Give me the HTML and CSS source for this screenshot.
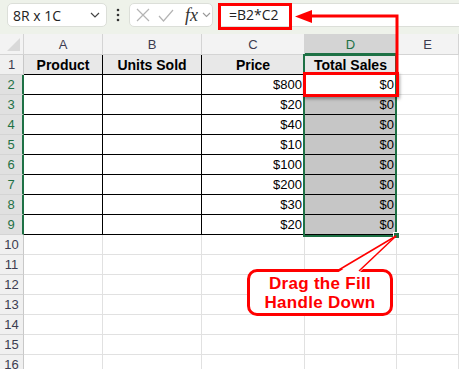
FILE: index.html
```html
<!DOCTYPE html>
<html>
<head>
<meta charset="utf-8">
<title>Fill Handle</title>
<link rel="stylesheet" href="styles.css">
</head>
<body>
<div class="app">

  <!-- name box, function buttons, formula bar -->
  <div class="toolbar">
    <div class="namebox">
      <span>8R x 1C</span>
      <svg class="chev" width="10" height="6" viewBox="0 0 10 6"><path d="M1 1 L5 5 L9 1" fill="none" stroke="#444" stroke-width="1.2"/></svg>
    </div>
    <div class="kebab">
      <svg width="4" height="14" viewBox="0 0 4 14"><circle cx="2" cy="2" r="1.3" fill="#333"/><circle cx="2" cy="7" r="1.3" fill="#333"/><circle cx="2" cy="12" r="1.3" fill="#333"/></svg>
    </div>
    <div class="fxbox">
      <svg width="14" height="14" viewBox="0 0 14 14"><path d="M1 1 L13 13 M13 1 L1 13" stroke="#b4b4b4" stroke-width="1.2"/></svg>
      <svg width="16" height="13" viewBox="0 0 16 13"><path d="M1 7 L5.5 12 L15 1" fill="none" stroke="#b4b4b4" stroke-width="1.2"/></svg>
      <span class="fx">fx</span>
      <svg width="9" height="6" viewBox="0 0 9 6"><path d="M1 1 L4.5 4.5 L8 1" fill="none" stroke="#999" stroke-width="1.1"/></svg>
    </div>
    <div class="formula">=B2*C2</div>
  </div>

  <!-- worksheet -->
  <div class="sheet">
    <div class="corner"></div>
    <div class="ch">A</div>
    <div class="ch">B</div>
    <div class="ch">C</div>
    <div class="ch sel">D</div>
    <div class="ch">E</div>

    <div class="rh">1</div>
    <div class="c t hd">Product</div>
    <div class="c t hd">Units Sold</div>
    <div class="c t hd">Price</div>
    <div class="c t hd">Total Sales</div>
    <div class="c"></div>

    <div class="rh sel">2</div>
    <div class="c t"></div>
    <div class="c t"></div>
    <div class="c t num">$800</div>
    <div class="c t num">$0</div>
    <div class="c"></div>

    <div class="rh sel">3</div>
    <div class="c t"></div>
    <div class="c t"></div>
    <div class="c t num">$20</div>
    <div class="c t num fill">$0</div>
    <div class="c"></div>

    <div class="rh sel">4</div>
    <div class="c t"></div>
    <div class="c t"></div>
    <div class="c t num">$40</div>
    <div class="c t num fill">$0</div>
    <div class="c"></div>

    <div class="rh sel">5</div>
    <div class="c t"></div>
    <div class="c t"></div>
    <div class="c t num">$10</div>
    <div class="c t num fill">$0</div>
    <div class="c"></div>

    <div class="rh sel">6</div>
    <div class="c t"></div>
    <div class="c t"></div>
    <div class="c t num">$100</div>
    <div class="c t num fill">$0</div>
    <div class="c"></div>

    <div class="rh sel">7</div>
    <div class="c t"></div>
    <div class="c t"></div>
    <div class="c t num">$200</div>
    <div class="c t num fill">$0</div>
    <div class="c"></div>

    <div class="rh sel">8</div>
    <div class="c t"></div>
    <div class="c t"></div>
    <div class="c t num">$30</div>
    <div class="c t num fill">$0</div>
    <div class="c"></div>

    <div class="rh sel">9</div>
    <div class="c t"></div>
    <div class="c t"></div>
    <div class="c t num">$20</div>
    <div class="c t num fill">$0</div>
    <div class="c"></div>

    <div class="rh">10</div>
    <div class="c"></div><div class="c"></div><div class="c"></div><div class="c"></div><div class="c"></div>
    <div class="rh">11</div>
    <div class="c"></div><div class="c"></div><div class="c"></div><div class="c"></div><div class="c"></div>
    <div class="rh">12</div>
    <div class="c"></div><div class="c"></div><div class="c"></div><div class="c"></div><div class="c"></div>
    <div class="rh">13</div>
    <div class="c"></div><div class="c"></div><div class="c"></div><div class="c"></div><div class="c"></div>
    <div class="rh">14</div>
    <div class="c"></div><div class="c"></div><div class="c"></div><div class="c"></div><div class="c"></div>
    <div class="rh">15</div>
    <div class="c"></div><div class="c"></div><div class="c"></div><div class="c"></div><div class="c"></div>
    <div class="rh">16</div>
    <div class="c"></div><div class="c"></div><div class="c"></div><div class="c"></div><div class="c"></div>
  </div>

  <!-- selection and annotations, drawn over the sheet -->
  <div class="selection"></div>
  <div class="handle"></div>
  <div class="redbox rb-formula"></div>
  <div class="redbox rb-cell"></div>

  <div class="callout">
    <span>Drag the Fill</span>
    <span>Handle Down</span>
  </div>

  <svg class="marks" width="459" height="369" viewBox="0 0 459 369">
    <polyline points="397,73 397,16 310,16" fill="none" stroke="#ff0000" stroke-width="3"/>
    <polygon points="295,16.5 312,10 312,23" fill="#ff0000"/>
    <polygon points="337,273 396,236 359,273" fill="#fff"/>
    <line x1="337" y1="271" x2="396" y2="236" stroke="#ff0000" stroke-width="1.5"/>
    <line x1="359" y1="271" x2="396" y2="236" stroke="#ff0000" stroke-width="1.5"/>
  </svg>

</div>
</body>
</html>
```

FILE: styles.css
```css
body {
	margin: 0;
	background: #fff;
	font-family: "Liberation Sans", Arial, sans-serif;
}

.app {
	position: relative;
	width: 459px;
	height: 369px;
	overflow: hidden;
}

/* top bar */
.toolbar {
	display: flex;
	align-items: flex-start;
	height: 34px;
	box-sizing: border-box;
	padding: 3px 0 0 7px;
	background: #eef2ea;
	font-family: "Open Sans", sans-serif;
	font-size: 14px;
	color: #222;
}

.namebox {
	display: flex;
	align-items: center;
	justify-content: space-between;
	width: 100px;
	height: 24px;
	box-sizing: border-box;
	padding: 0 6px 0 5px;
	background: #fff;
	border: 1px solid #dcdfd9;
	border-radius: 5px;
}

.kebab {
	display: flex;
	align-items: center;
	justify-content: center;
	width: 22px;
	height: 24px;
}

.fxbox {
	display: flex;
	align-items: center;
	gap: 8px;
	width: 84px;
	height: 24px;
	box-sizing: border-box;
	padding: 0 0 0 6px;
	background: #fff;
	border: 1px solid #dcdfd9;
	border-radius: 5px;
}

.fx {
	font-family: "Liberation Serif", serif;
	font-style: italic;
	font-size: 18px;
	color: #333;
	margin-left: 3px;
	margin-right: -4px;
}

.formula {
	flex: 1;
	height: 24px;
	margin-left: 5px;
	box-sizing: border-box;
	padding-left: 10px;
	background: #fff;
	border: 1px solid #dcdfd9;
	border-right: none;
	border-radius: 5px 0 0 5px;
	line-height: 22px;
}

/* grid */
.sheet {
	display: grid;
	grid-template-columns: 24px 79px 99px 103px 92px 62px;
	grid-template-rows: 21px repeat(16, 20px);
}

.corner {
	position: relative;
	background: #f3f3f3;
	border-right: 1px solid #d4d4d4;
	border-bottom: 1px solid #d4d4d4;
}

.corner:after {
	content: "";
	position: absolute;
	right: 3px;
	bottom: 3px;
	border-left: 13px solid transparent;
	border-bottom: 13px solid #d9d9d9;
}

.ch {
	box-sizing: border-box;
	background: #f3f3f3;
	border-right: 1px solid #d4d4d4;
	border-bottom: 1px solid #d4d4d4;
	text-align: center;
	font-size: 13px;
	line-height: 21px;
	color: #3c3c50;
}

.ch.sel {
	background: #d4d4d4;
	color: #1e7145;
	border-bottom: 2px solid #1e7145;
}

.rh {
	box-sizing: border-box;
	background: #f0f0f0;
	border-right: 1px solid #c8c8c8;
	border-bottom: 1px solid #d4d4d4;
	text-align: center;
	font-size: 13px;
	line-height: 20px;
	color: #3c3c50;
}

.rh.sel {
	background: #e0e0e0;
	color: #1e7145;
	border-right: 2px solid #1e7145;
}

.c {
	box-sizing: border-box;
	border-right: 1px solid #e1e1e1;
	border-bottom: 1px solid #e1e1e1;
	font-family: "Liberation Sans", sans-serif;
	font-size: 13px;
	line-height: 20px;
	color: #000;
}

.c.t {
	border-color: #000;
}

.hd {
	background: #e8e8e8;
	font-weight: bold;
	font-size: 14px;
	text-align: center;
}

.num {
	text-align: right;
	padding-right: 2px;
}

.fill {
	background: #c6c6c6;
}

/* overlays */
.selection {
	position: absolute;
	left: 303px;
	top: 54px;
	width: 94px;
	height: 183px;
	box-sizing: border-box;
	border: 2px solid #1e7145;
}

.handle {
	position: absolute;
	left: 393px;
	top: 232px;
	width: 5px;
	height: 5px;
	background: #1e7145;
	border: 1px solid #fff;
}

.redbox {
	position: absolute;
	box-sizing: border-box;
	border: 3px solid #ff0000;
}

.rb-formula {
	left: 218px;
	top: 3px;
	width: 74px;
	height: 27px;
}

.rb-cell {
	left: 303px;
	top: 72px;
	width: 96px;
	height: 25px;
	box-shadow: 1px 2px 3px rgba(0, 0, 0, 0.35);
}

.callout {
	position: absolute;
	left: 247px;
	top: 269px;
	width: 146px;
	height: 47px;
	box-sizing: border-box;
	display: flex;
	flex-direction: column;
	justify-content: center;
	background: #fff;
	border: 3px solid #ff0000;
	border-radius: 10px;
	color: #ff0000;
	font-family: "Liberation Sans", sans-serif;
	font-weight: bold;
	font-size: 17px;
	line-height: 19px;
	letter-spacing: 0.3px;
	text-align: center;
}

.marks {
	position: absolute;
	left: 0;
	top: 0;
}
```
